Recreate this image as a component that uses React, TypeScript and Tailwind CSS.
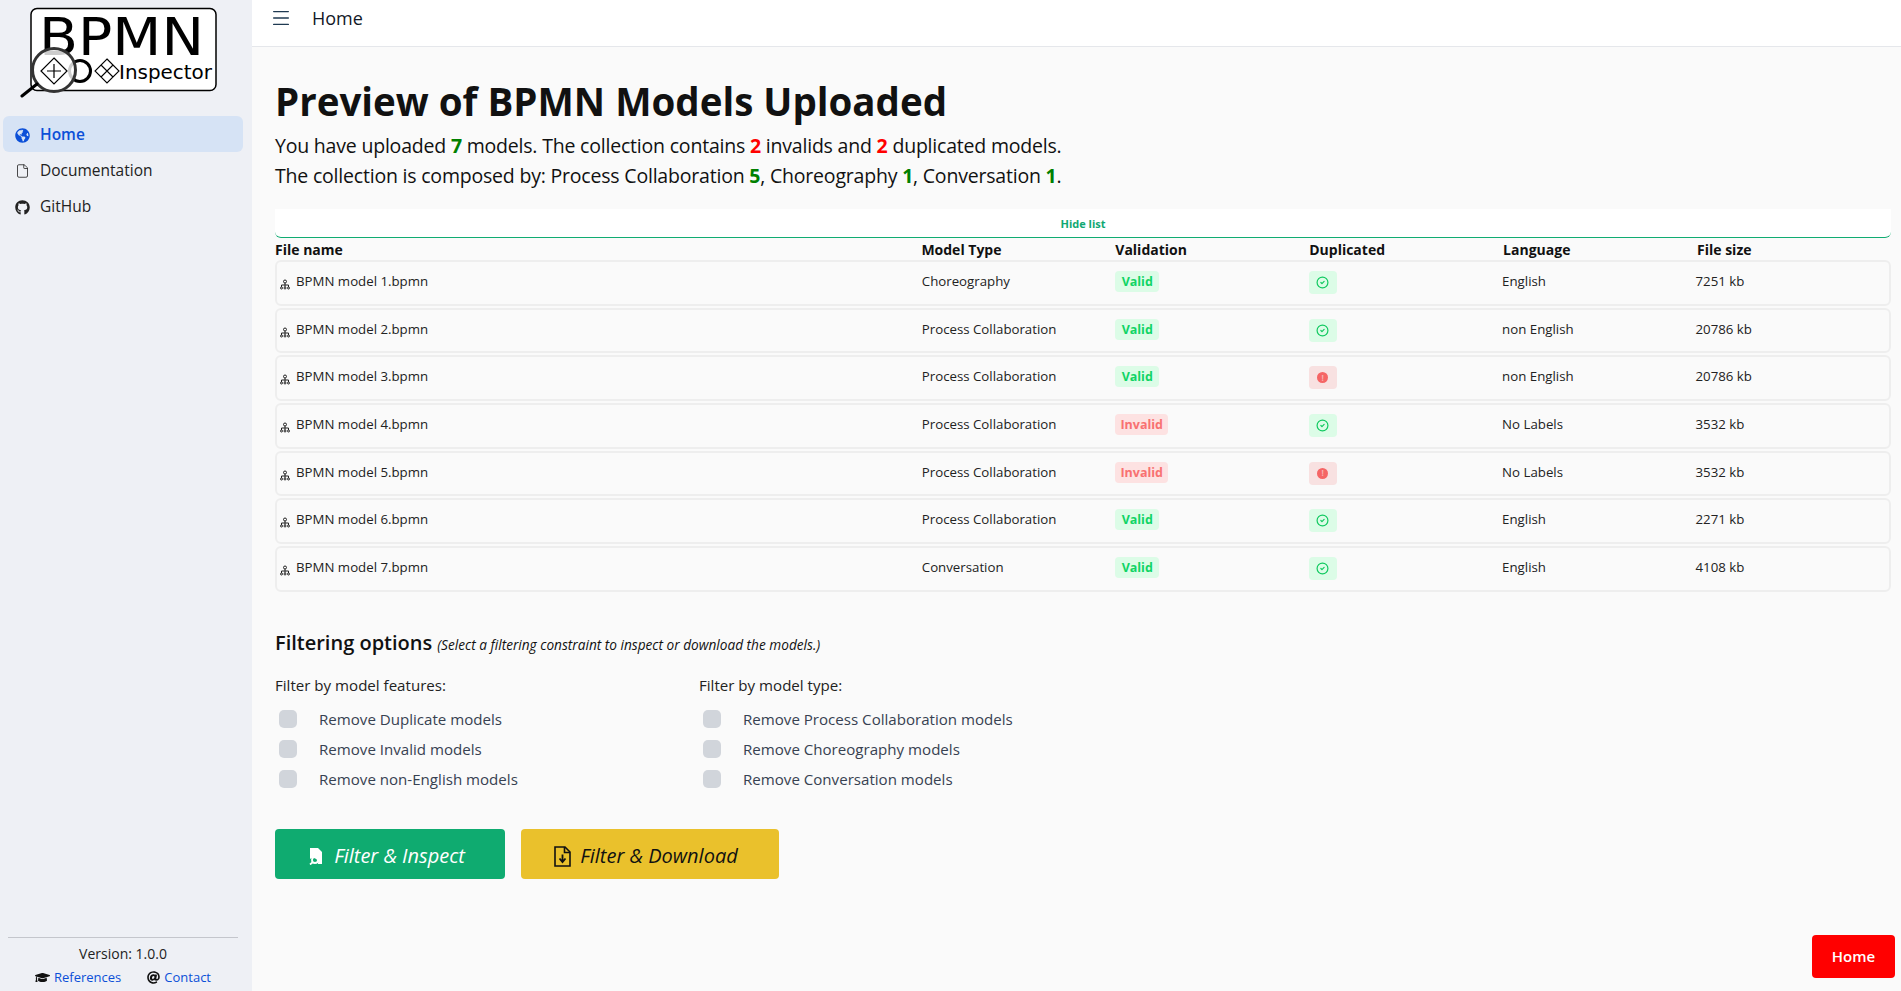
import { CircleCheck, File, Menu } from 'lucide-react';
import { FaAt, FaGithub, FaGlobeAmericas, FaGraduationCap } from 'react-icons/fa';

const models = [
  { name: 'BPMN model 1.bpmn', type: 'Choreography', valid: true, unique: true, lang: 'English', size: '7251 kb' },
  { name: 'BPMN model 2.bpmn', type: 'Process Collaboration', valid: true, unique: true, lang: 'non English', size: '20786 kb' },
  { name: 'BPMN model 3.bpmn', type: 'Process Collaboration', valid: true, unique: false, lang: 'non English', size: '20786 kb' },
  { name: 'BPMN model 4.bpmn', type: 'Process Collaboration', valid: false, unique: true, lang: 'No Labels', size: '3532 kb' },
  { name: 'BPMN model 5.bpmn', type: 'Process Collaboration', valid: false, unique: false, lang: 'No Labels', size: '3532 kb' },
  { name: 'BPMN model 6.bpmn', type: 'Process Collaboration', valid: true, unique: true, lang: 'English', size: '2271 kb' },
  { name: 'BPMN model 7.bpmn', type: 'Conversation', valid: true, unique: true, lang: 'English', size: '4108 kb' },
];

function Logo() {
  return (
    <svg width="200" height="100" viewBox="0 0 200 100" className="block">
      <rect x="11" y="8.5" width="185" height="82" rx="6" fill="#fff" stroke="#000" strokeWidth="1.5" />
      <text x="19" y="55" fontFamily="DejaVu Sans" fontSize="51" textLength="165" lengthAdjust="spacingAndGlyphs" fill="#000">BPMN</text>
      <circle cx="60" cy="71" r="10.500" fill="#fff" stroke="#000" strokeWidth="3" />
      <path d="M87 59l12 12-12 12-12-12zM81 65l12 12M93 65l-12 12" fill="#fff" stroke="#000" strokeWidth="1.100" />
      <text x="99" y="79" fontFamily="DejaVu Sans" fontSize="19" textLength="93" lengthAdjust="spacingAndGlyphs" fill="#000">Inspector</text>
      <circle cx="34" cy="70" r="21.500" fill="#fff" fillOpacity="0.8" stroke="#333" strokeWidth="3" />
      <path d="M34 58l13 13-13 13-13-13zM34 64v14M27 71h14" fill="none" stroke="#000" strokeWidth="1.200" />
      <path d="M17 84L2 96" stroke="#000" strokeWidth="3" strokeLinecap="round" />
    </svg>
  );
}

function HierarchyIcon() {
  return (
    <svg width="10" height="11" viewBox="0 0 10 11" fill="none" stroke="#222" strokeWidth="1" className="shrink-0 mt-1">
      <circle cx="5" cy="2.500" r="1.500" />
      <path d="M1.500 8V6h7v2M5 4v4" />
      <circle cx="1.500" cy="9" r="1" />
      <circle cx="5" cy="9" r="1" />
      <circle cx="8.500" cy="9" r="1" />
    </svg>
  );
}

function FileSearchIcon() {
  return (
    <svg width="14" height="17" viewBox="0 0 14 17" className="shrink-0">
      <path d="M1 0h8l4 4v12H9a5 5 0 0 0-8-5z" fill="#fff" />
      <circle cx="6" cy="12" r="3" fill="none" stroke="#fff" strokeWidth="1.800" />
      <path d="M4 14l-3 2.500" stroke="#fff" strokeWidth="1.800" />
    </svg>
  );
}

function FileDownIcon() {
  return (
    <svg width="17" height="21" viewBox="0 0 17 21" fill="none" stroke="#111" strokeWidth="1.600" className="shrink-0">
      <path d="M1 1h10l5 5v14H1z" />
      <path d="M10.500 1v5.500H16" />
      <path d="M8.500 8.500v7M5.500 12.500l3 3.500 3-3.500" strokeWidth="1.800" />
    </svg>
  );
}

function Num({ red, children }: { red?: boolean; children: React.ReactNode }) {
  return <b className={red ? 'text-[#ff0000]' : 'text-[#008000]'}>{children}</b>;
}

export default function App() {
  return (
    <div className="relative flex h-[991px] overflow-hidden bg-[#fafafa] text-[#111] font-['Open_Sans','Noto_Sans',sans-serif]">
      <aside className="flex w-[252px] shrink-0 flex-col bg-[#eef0f5]">
        <div className="h-[116px] pl-[20px]">
          <Logo />
        </div>
        <nav className="flex flex-col px-[3px] text-[15.500px]">
          <a className="flex h-9 w-[240px] items-center gap-[10px] rounded-md bg-[#d6e3f5] pt-[2px] pl-3 font-semibold text-[#0b4fd8]">
            <FaGlobeAmericas size={15} />
            Home
          </a>
          <a className="flex h-9 items-center gap-[10px] pt-[2px] pl-3 text-[#222]">
            <span className="flex w-[15px] justify-center"><File size={18} strokeWidth={1.300} /></span>
            Documentation
          </a>
          <a className="flex h-[36px] items-center gap-[10px] pt-[2px] pl-3 text-[#222]">
            <FaGithub size={15} />
            GitHub
          </a>
        </nav>
        <div className="mt-auto mr-[14px] mb-[4px] ml-2 border-t border-[#c4c6cc] pt-[6px] text-center">
          <div className="text-[14px] leading-5 text-[#222]">Version: 1.0.0</div>
          <div className="mt-[3px] flex justify-center gap-[26px] text-[13px] leading-5 text-[#0b4fd8]">
            <a className="flex items-center gap-[4px]">
              <FaGraduationCap size={15} className="text-[#111]" />
              References
            </a>
            <a className="flex items-center gap-[4px]">
              <FaAt size={13} className="text-[#111]" />
              Contact
            </a>
          </div>
        </div>
      </aside>

      <div className="flex min-w-0 flex-1 flex-col">
        <header className="flex h-[47px] shrink-0 items-center border-b border-[#e5e7eb] bg-white pb-[10px] pl-[18px]">
          <Menu size={22} strokeWidth={1.500} className="text-[#1f3a52]" />
          <span className="ml-[20px] text-[18px] text-[#111827]">Home</span>
        </header>

        <main className="px-[23px] pt-[27px] pr-[10px]">
          <h1 className="text-[38.500px] leading-[54px] font-bold text-[#111]">Preview of BPMN Models Uploaded</h1>
          <p className="mt-[3px] text-[19.500px] leading-[30px] tracking-[-0.2px]">
            You have uploaded <Num>7</Num> models. The collection contains <Num red>2</Num> invalids and <Num red>2</Num> duplicated models.
          </p>
          <p className="text-[19.500px] leading-[30px] tracking-[-0.2px]">
            The collection is composed by: Process Collaboration <Num>5</Num>, Choreography <Num>1</Num>, Conversation <Num>1</Num>.
          </p>

          <div className="mt-[18px] flex h-[29px] items-center justify-center rounded-b-md border-b-[1.500px] border-[#10ac72] bg-white pt-[2px] text-[11px] font-bold text-[#10a873]">
            Hide list
          </div>

          <div className="grid grid-cols-[40%_repeat(5,12%)] pt-[1px] text-[14px] leading-[21px] font-bold text-[#111]">
            <div>File name</div>
            <div>Model Type</div>
            <div>Validation</div>
            <div>Duplicated</div>
            <div>Language</div>
            <div>File size</div>
          </div>

          <div className="flex flex-col gap-[2px]">
            {models.map((m) => (
              <div key={m.name} className="grid h-[45.700px] grid-cols-[40%_repeat(5,12%)] rounded-md border-2 border-[#eeeeee] bg-[#fafafa] pt-[9px] text-[13.250px] leading-[20px] text-[#222]">
                <div className="flex items-start gap-[6px] pl-[3px]">
                  <span className="flex h-5 items-center pt-[3px]"><HierarchyIcon /></span>
                  {m.name}
                </div>
                <div>{m.type}</div>
                <div>
                  {m.valid ? (
                    <span className="inline-block h-[21px] w-[44px] rounded bg-[#dcfce7] text-center text-[12.500px] leading-[21px] font-bold text-[#10d465]">Valid</span>
                  ) : (
                    <span className="inline-block h-[21px] w-[53px] rounded bg-[#fde2e2] text-center text-[12.500px] leading-[21px] font-bold text-[#f87171]">Invalid</span>
                  )}
                </div>
                <div>
                  {m.unique ? (
                    <span className="flex h-[23px] w-[28px] items-center justify-center rounded bg-[#dcfce7] text-[#10c95f]">
                      <CircleCheck size={13} strokeWidth={2.200} />
                    </span>
                  ) : (
                    <span className="flex h-[23px] w-[28px] items-center justify-center rounded bg-[#f8e1e1]">
                      <span className="flex h-[11px] w-[11px] items-center justify-center rounded-full bg-[#f56565] text-[8px] leading-none font-bold text-[#f8b0b0]">!</span>
                    </span>
                  )}
                </div>
                <div>{m.lang}</div>
                <div>{m.size}</div>
              </div>
            ))}
          </div>

          <div className="mt-[35px] flex items-baseline gap-[5px]">
            <h2 className="text-[20px] leading-[32px] font-semibold">Filtering options</h2>
            <span className="text-[13.650px] italic">(Select a filtering constraint to inspect or download the models.)</span>
          </div>

          <div className="mt-[14px] flex text-[15.100px]">
            <FilterGroup
              className="w-[424px]"
              title="Filter by model features:"
              options={['Remove Duplicate models', 'Remove Invalid models', 'Remove non-English models']}
            />
            <FilterGroup
              title="Filter by model type:"
              options={['Remove Process Collaboration models', 'Remove Choreography models', 'Remove Conversation models']}
            />
          </div>

          <div className="mt-[41px] flex gap-[16px]">
            <button className="flex h-[50px] w-[230px] items-center justify-center gap-[11px] rounded bg-[#0fab70] pt-[5px] pr-[6px] text-[20px] text-white italic">
              <FileSearchIcon />
              Filter &amp; Inspect
            </button>
            <button className="flex h-[50px] w-[258px] items-center justify-center gap-[9px] rounded bg-[#eac12c] pt-[5px] pr-[8px] text-[20px] text-[#111] italic">
              <FileDownIcon />
              Filter &amp; Download
            </button>
          </div>
        </main>
      </div>

      <button className="absolute right-[6px] bottom-[13px] h-[43px] w-[83px] rounded bg-[#ff0000] text-[15px] font-semibold text-white">Home</button>
    </div>
  );
}

function FilterGroup({ title, options, className }: { title: string; options: string[]; className?: string }) {
  return (
    <div className={className}>
      <div className="leading-[24px] text-[#222]">{title}</div>
      <div className="mt-[13px] flex flex-col gap-[12px]">
        {options.map((o) => (
          <label key={o} className="flex h-[18px] items-center text-[#374151]">
            <span className="ml-[4px] h-[18px] w-[18px] rounded-[5px] bg-[#d1d5db]" />
            <span className="ml-[22px]">{o}</span>
          </label>
        ))}
      </div>
    </div>
  );
}
